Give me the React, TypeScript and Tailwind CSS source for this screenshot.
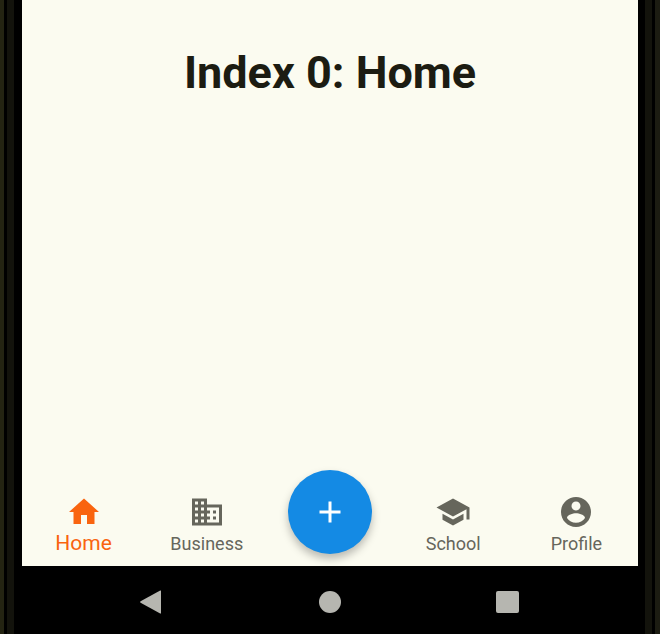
const navItems = [
  { label: 'Home', active: true, path: 'M10 20v-6h4v6h5v-8h3L12 3 2 12h3v8z' },
  {
    label: 'Business',
    active: false,
    path: 'M12 7V3H2v18h20V7H12zM6 19H4v-2h2v2zm0-4H4v-2h2v2zm0-4H4V9h2v2zm0-4H4V5h2v2zm4 12H8v-2h2v2zm0-4H8v-2h2v2zm0-4H8V9h2v2zm0-4H8V5h2v2zm10 12h-8v-2h2v-2h-2v-2h2v-2h-2V9h8v10zm-2-8h-2v2h2v-2zm0 4h-2v2h2v-2z',
  },
  null,
  {
    label: 'School',
    active: false,
    path: 'M5 13.18v4L12 21l7-3.82v-4L12 17l-7-3.82zM12 3L1 9l11 6 9-4.91V17h2V9L12 3z',
  },
  {
    label: 'Profile',
    active: false,
    path: 'M12 2C6.48 2 2 6.48 2 12s4.48 10 10 10 10-4.48 10-10S17.52 2 12 2zm0 3c1.66 0 3 1.34 3 3s-1.34 3-3 3-3-1.34-3-3 1.34-3 3-3zm0 14.2c-2.5 0-4.71-1.28-6-3.22.03-1.99 4-3.08 6-3.08 1.99 0 5.97 1.09 6 3.08-1.29 1.94-3.5 3.22-6 3.22z',
  },
];

function AddButton() {
  return (
    <button
      aria-label="Add"
      className="flex size-[84px] items-center justify-center rounded-full bg-[#148ae4] text-white shadow-[0_5px_8px_rgba(0,0,0,0.26)]"
    >
      <svg viewBox="0 0 24 24" className="size-9" fill="currentColor">
        <path d="M19 13h-6v6h-2v-6H5v-2h6V5h2v6h6v2z" />
      </svg>
    </button>
  );
}

function BottomNav() {
  return (
    <nav className="grid h-[96px] grid-cols-5">
      {navItems.map((item, i) =>
        item ? (
          <div
            key={item.label}
            className={`flex flex-col items-center pt-6 ${item.active ? 'text-[#f9640f]' : 'text-[#66665c]'}`}
          >
            <svg viewBox="0 0 24 24" className="size-9" fill="currentColor">
              <path d={item.path} />
            </svg>
            <span className={item.active ? 'pt-px text-[21px] leading-6' : 'pt-[3px] text-[18px] leading-[21px]'}>
              {item.label}
            </span>
          </div>
        ) : (
          <div key={i} className="flex items-start justify-center">
            <AddButton />
          </div>
        ),
      )}
    </nav>
  );
}

function SystemBar() {
  return (
    <div className="flex h-[68px] items-center justify-between bg-black pr-[119px] pl-[117px] pt-1 text-[#b6b6b0]">
      <svg viewBox="0 0 24 24" className="size-6" fill="currentColor">
        <path d="M22 1v22q0 .8-.8.4L1.600 12.700q-1.200-.7 0-1.400L21.200.6q.8-.4.8.4z" />
      </svg>
      <div className="size-[22px] rounded-full bg-current" />
      <div className="h-[22px] w-[23px] rounded-[2px] bg-current" />
    </div>
  );
}

export default function App() {
  return (
    <div className="flex h-[634px] w-[660px] overflow-hidden bg-black font-['Roboto',sans-serif]">
      <div className="flex w-[22px] shrink-0">
        <div className="w-1 bg-[#242412]" />
        <div className="ml-[3px] w-[7px] bg-[#13130c]" />
      </div>
      <div className="flex w-[616px] shrink-0 flex-col">
        <div className="flex h-[566px] flex-col justify-between bg-[#fbfbf0]">
          <h1 className="pt-[46px] text-center text-[45px] leading-[53px] font-bold text-[#1c1c12]">Index 0: Home</h1>
          <BottomNav />
        </div>
        <SystemBar />
      </div>
      <div className="flex w-[22px] shrink-0 justify-end">
        <div className="mr-[3px] w-[7px] bg-[#13130c]" />
        <div className="w-[5px] bg-[#1c1c12]" />
      </div>
    </div>
  );
}
